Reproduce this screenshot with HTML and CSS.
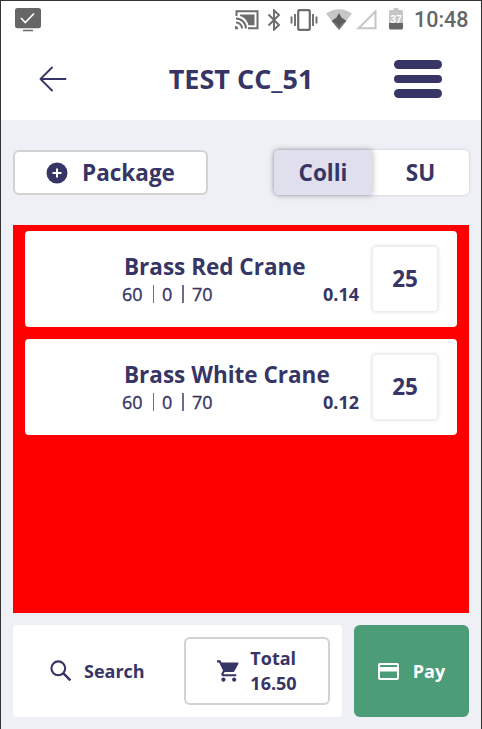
FILE: index.html
```html
<!DOCTYPE html>
<html lang="en">
<head>
<meta charset="utf-8">
<title>TEST CC_51</title>
<link rel="stylesheet" href="styles.css">
</head>
<body>
<div class="screen">
  <div class="status">
    <svg class="status-screen" width="28" height="26" viewBox="0 0 28 26"><rect x="1" y="1" width="26" height="20.3" rx="2.5" fill="#666"/><path d="M7 11l4.3 4.5 8.700-9" fill="none" stroke="#fff" stroke-width="1.7"/><path d="M9 23.500h10" stroke="#666" stroke-width="1.500"/></svg>
    <svg class="status-cast" width="24" height="20" viewBox="0 0 24 20"><g fill="none" stroke="#6c6c6c" stroke-width="2"><path d="M1.500 6V1.200h21v17H13"/><path d="M1 8.500a10 10 0 0 1 10 10M1 12.500a6 6 0 0 1 6 6"/></g><path d="M5 4.500h14.500v10.700h-6C12 10 9 7 5 6zM0 16a3.200 3.200 0 0 1 3.200 3.200H0z" fill="#6c6c6c"/></svg>
    <svg class="status-bt" width="14" height="22" viewBox="0 0 14 22"><path d="M1.500 5.500l10.500 10.500-5 4.700V1.300l5 4.700L1.500 16.500" fill="none" stroke="#6c6c6c" stroke-width="1.900"/></svg>
    <svg class="status-vibrate" width="28" height="22" viewBox="0 0 28 22"><rect x="8.200" y="1.200" width="11.600" height="19.600" rx="1.500" fill="none" stroke="#6c6c6c" stroke-width="2.200"/><path d="M1.500 7.500v7M5 5v12M23 5v12M26.500 7.500v7" stroke="#6c6c6c" stroke-width="1.900"/></svg>
    <svg class="status-wifi" width="26" height="22" viewBox="0 0 26 22"><path d="M0 4.500Q13-4 26 4.500L13 21z" fill="#c6c6c6"/><path d="M6 12.500Q13 8 20 12.500L13 21z" fill="#777"/><path d="M13 4l2.500 4.500 5 3.500-5 2.500-2.500 4-2.500-4-5-2.500 5-3.500z" fill="#5c5c5c"/></svg>
    <svg class="status-signal" width="21" height="21" viewBox="0 0 21 21"><path d="M2.500 19.200L19.500 2.500v16.700z" fill="none" stroke="#c6c6c6" stroke-width="2"/></svg>
    <svg class="status-battery" width="14" height="22" viewBox="0 0 14 22"><path d="M0 3.500q0-1.500 1.500-1.500H4.500V0h5v2h3Q14 2 14 3.500V15H0z" fill="#c6c6c6"/><path d="M0 15h14v5q0 1.500-1.500 1.500h-11Q0 21.500 0 20z" fill="#666"/><text class="battery-text" x="7" y="14.500" text-anchor="middle">37</text></svg>
    <span class="clock">10:48</span>
  </div>
  <header class="header">
    <svg class="back" width="28" height="26" viewBox="0 0 28 26"><path d="M26.500 13H1.500M13 1.500L1.500 13 13 24.500" fill="none" stroke="#363565" stroke-width="1.900" stroke-linecap="round" stroke-linejoin="round"/></svg>
    <h1 class="title">TEST CC_51</h1>
    <div class="menu"><i></i><i></i><i></i></div>
  </header>
  <div class="toolbar">
    <div class="package">
      <svg width="22" height="22" viewBox="0 0 22 22"><circle cx="11" cy="11" r="10.500" fill="#363565"/><path d="M11 6.500v9M6.500 11h9" stroke="#fff" stroke-width="2"/></svg>
      <span>Package</span>
    </div>
    <div class="toggle"><div class="option active">Colli</div><div class="option">SU</div></div>
  </div>
  <main class="list">
    <article class="item">
      <div class="info"><h2 class="name">Brass Red Crane</h2><div class="detail"><div class="stock"><span>60</span><i></i><span>0</span><i></i><span>70</span></div><b>0.14</b></div></div>
      <div class="qty">25</div>
    </article>
    <article class="item">
      <div class="info"><h2 class="name">Brass White Crane</h2><div class="detail"><div class="stock"><span>60</span><i></i><span>0</span><i></i><span>70</span></div><b>0.12</b></div></div>
      <div class="qty">25</div>
    </article>
  </main>
  <footer class="footer">
    <div class="panel">
      <div class="search">
        <svg width="22" height="22" viewBox="0 0 22 22"><circle cx="8.300" cy="8.300" r="6.900" fill="none" stroke="#363565" stroke-width="2.100"/><path d="M13.200 13.200l7.200 7.200" stroke="#363565" stroke-width="2.500"/></svg>
        <span>Search</span>
      </div>
      <div class="total">
        <svg width="22" height="22" viewBox="1 2 20.500 20"><path fill="#363565" d="M7 18c-1.100 0-1.990.9-1.990 2S5.900 22 7 22s2-.9 2-2-.9-2-2-2zM1 2v2h2l3.600 7.590-1.350 2.450c-.16.280-.25.610-.25.960 0 1.100.9 2 2 2h12v-2H7.420c-.14 0-.25-.11-.25-.25l.03-.12.900-1.630h7.450c.75 0 1.410-.41 1.750-1.030l3.580-6.490A1 1 0 0 0 20 4H5.210l-.94-2H1zm16 16c-1.100 0-1.990.9-1.990 2s.89 2 1.990 2 2-.9 2-2-.9-2-2-2z"/></svg>
        <span>Total<br>16.50</span>
      </div>
    </div>
    <div class="pay">
      <svg width="21" height="17" viewBox="0 0 21 17"><path fill="#fff" fill-rule="evenodd" d="M2 0h17q2 0 2 2v13q0 2-2 2H2q-2 0-2-2V2Q0 0 2 0zM2 2v2h17V2zM2 8.500V15h17V8.500z"/></svg>
      <span>Pay</span>
    </div>
  </footer>
</div>
</body>
</html>
```
FILE: styles.css
```css
* { box-sizing: border-box; }
body {
  margin: 0;
  font-family: "Open Sans", sans-serif;
  color: #363565;
  background: #eff0f6;
}
h1, h2 { margin: 0; }
svg { display: block; flex: none; }
.screen {
  height: 729px;
  border: 1px solid #333;
  border-bottom: 0;
  display: flex;
  flex-direction: column;
  overflow: hidden;
}
.status {
  height: 37px;
  flex: none;
  background: #fff;
  display: flex;
  align-items: center;
  padding: 0 12px 0 13px;
}
.status-screen { margin-right: 193px; }
.status-cast { margin-right: 8px; }
.status-bt { margin-right: 9px; }
.status-vibrate { margin-right: 8px; }
.status-wifi { margin-right: 4px; }
.status-signal { margin-right: 12px; }
.status-battery { margin-right: 11px; margin-bottom: 2px; }
.battery-text { font: 700 10px Roboto, sans-serif; fill: #fff; }
.clock {
  font: 500 21.500px/37px Roboto, sans-serif;
  color: #666;
  white-space: nowrap;
}
.header {
  height: 82px;
  flex: none;
  background: #fff;
  display: flex;
  align-items: center;
  justify-content: space-between;
  padding: 0 39px 0 38px;
}
.title {
  font-size: 27px;
  font-weight: 700;
  line-height: 36px;
  white-space: nowrap;
  margin-left: 21px;
}
.menu { width: 48px; display: grid; gap: 6px; }
.menu i { height: 8.500px; border-radius: 4.500px; background: #363565; }
.toolbar {
  margin: 30px 12px;
  height: 45px;
  flex: none;
  display: flex;
  justify-content: space-between;
  font-size: 22.500px;
  font-weight: 700;
}
.package {
  width: 195px;
  background: #fff;
  border: 2px solid #d2d2d2;
  border-radius: 6px;
  display: flex;
  align-items: center;
  justify-content: center;
  gap: 14px;
}
.toggle {
  width: 195px;
  display: flex;
  background: #fff;
  border-radius: 5px;
  box-shadow: 0 0 3px rgba(0, 0, 0, .18);
}
.option {
  flex: 1;
  display: flex;
  align-items: center;
  justify-content: center;
}
.active {
  flex: 0 0 98px;
  background: #dfdfed;
  border-radius: 5px 0 0 5px;
  box-shadow: 0 0 6px rgba(0, 0, 0, .32);
}
.list {
  height: 388px;
  flex: none;
  margin: 0 12px;
  padding: 6px 12px;
  background: #f00;
  display: flex;
  flex-direction: column;
  gap: 12px;
}
.item {
  height: 96px;
  background: #fff;
  border-radius: 4px;
  display: flex;
  align-items: center;
  padding: 0 20px 0 97px;
}
.info { width: 237px; margin-right: 14px; }
.name {
  font-size: 22.500px;
  line-height: 30px;
  white-space: nowrap;
  padding: 1px 0 0 2px;
  margin-bottom: -1px;
}
.detail {
  display: flex;
  justify-content: space-between;
  font-size: 18px;
  line-height: 26px;
}
.stock { display: flex; align-items: center; -webkit-text-stroke: .35px #363565; }
.stock i { width: 1.500px; height: 18px; background: #6d6b91; margin: 0 8px 0 10px; }
.qty {
  width: 64px;
  height: 64px;
  flex: none;
  border-radius: 3px;
  box-shadow: 0 0 3px 2px #eaeaea;
  display: flex;
  align-items: center;
  justify-content: center;
  font-size: 22.500px;
  line-height: 30px;
  font-weight: 700;
}
.footer {
  height: 92px;
  flex: none;
  margin: 12px 12px 0;
  display: flex;
  gap: 12px;
  font-size: 18px;
  font-weight: 700;
}
.panel {
  width: 329px;
  background: #fff;
  border-radius: 4px;
  display: flex;
  align-items: center;
  padding-right: 12px;
}
.search { flex: 1; display: flex; align-items: center; gap: 12px; padding-left: 37px; }
.total {
  width: 146px;
  height: 68px;
  border: 2px solid #d2d2d2;
  border-radius: 6px;
  display: flex;
  align-items: center;
  justify-content: center;
  gap: 11px;
  line-height: 25px;
}
.pay {
  flex: 1;
  background: #4c9c78;
  color: #fff;
  border-radius: 6px;
  display: flex;
  align-items: center;
  justify-content: center;
  gap: 14px;
}
```
